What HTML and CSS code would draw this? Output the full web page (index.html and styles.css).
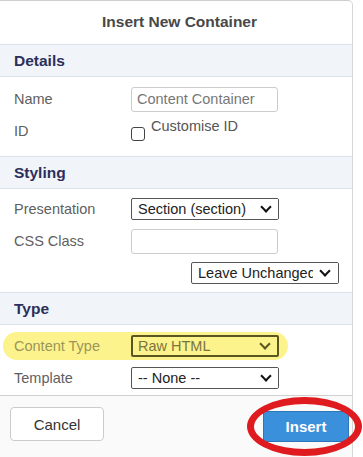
FILE: index.html
```html
<!DOCTYPE html>
<html lang="en">
<head>
  <meta charset="UTF-8">
  <title>Insert New Container</title>
  <link rel="stylesheet" href="styles.css">
</head>
<body>
  <div class="dialog">
    <div class="dialog__title">Insert New Container</div>

    <div class="band">Details</div>
    <div class="fields">
      <div class="row">
        <label class="row__label">Name</label>
        <input class="text-input" type="text" placeholder="Content Container">
      </div>
      <div class="row">
        <label class="row__label">ID</label>
        <label class="check"><span class="check__box"></span><span class="check__text">Customise ID</span></label>
      </div>
    </div>

    <div class="band">Styling</div>
    <div class="fields fields--styling">
      <div class="row">
        <label class="row__label">Presentation</label>
        <div class="select">Section (section)<span class="select__arrow"></span></div>
      </div>
      <div class="row">
        <label class="row__label">CSS Class</label>
        <input class="text-input" type="text">
      </div>
      <div class="row row--right">
        <div class="select select--clip">Leave Unchanged<span class="select__arrow"></span></div>
      </div>
    </div>

    <div class="band">Type</div>
    <div class="fields fields--type">
      <div class="row row--marked">
        <span class="highlight"></span>
        <label class="row__label">Content Type</label>
        <div class="select">Raw HTML<span class="select__arrow"></span></div>
      </div>
      <div class="row">
        <label class="row__label">Template</label>
        <div class="select">-- None --<span class="select__arrow"></span></div>
      </div>
    </div>

    <div class="dialog__footer">
      <button class="btn">Cancel</button>
      <div class="insert-wrap">
        <button class="btn btn--primary">Insert</button>
        <span class="circle"></span>
      </div>
    </div>
  </div>
</body>
</html>
```

FILE: styles.css
```css
html, body {
  margin: 0;
  background: #fff;
  font-family: "Liberation Sans", Arial, sans-serif;
  overflow: hidden;
}

.dialog {
  width: 352px;
  height: 457px;
  border-top: 1px solid #cfcfcf;
  border-right: 1px solid #d6d6d6;
  border-top-right-radius: 5px;
  background: #fff;
  position: relative;
}

.dialog__title {
  height: 43px;
  line-height: 41px;
  text-align: center;
  padding-left: 7px;
  font-size: 15.5px;
  font-weight: bold;
  color: #484848;
  border-bottom: 1px solid #dde3ec;
  border-top-right-radius: 5px;
}

.band {
  height: 31px;
  line-height: 31px;
  padding-left: 14px;
  background: #f1f5fa;
  border-bottom: 1px solid #dde3ec;
  color: #2c2f5b;
  font-size: 15.5px;
  font-weight: bold;
}

.fields {
  padding: 6px 0 9px;
  border-bottom: 1px solid #dde3ec;
}

.fields--styling {
  padding: 4px 0 3px;
}

.fields--type {
  padding: 5px 0 1px;
  border-bottom: 1px solid #d0d0d0;
}

.row {
  position: relative;
  display: flex;
  align-items: center;
  height: 32px;
}

.row--right {
  padding-left: 191px;
}

.row__label {
  width: 117px;
  padding-left: 14px;
  font-size: 14.5px;
  color: #606060;
  position: relative;
}

.text-input {
  box-sizing: border-box;
  width: 147px;
  height: 25px;
  margin: 0;
  padding: 0 5px;
  border: 1px solid #ccc;
  border-radius: 3px;
  font-family: inherit;
  font-size: 14.5px;
  color: #555;
  outline: none;
}

.text-input::placeholder {
  color: #777;
}

.check {
  display: flex;
  align-items: flex-start;
  height: 22px;
  color: #555;
  font-size: 14.5px;
}

.check__box {
  box-sizing: border-box;
  width: 14px;
  height: 14px;
  margin-top: 7px;
  border: 1px solid #444;
  border-radius: 3px;
  background: #fff;
}

.check__text {
  margin-left: 6px;
  margin-top: -2px;
}

.select {
  position: relative;
  box-sizing: border-box;
  width: 148px;
  height: 22px;
  line-height: 20px;
  padding-left: 6px;
  border: 1px solid #555;
  border-radius: 2px;
  font-size: 14.5px;
  color: #222;
  background: #fff;
  white-space: nowrap;
  overflow: hidden;
}

.select__arrow {
  position: absolute;
  right: 0;
  top: 0;
  width: 24px;
  height: 20px;
  background: inherit;
}

.select--clip .select__arrow {
  width: 25px;
}

.select__arrow::after {
  content: "";
  position: absolute;
  left: 8px;
  top: 4px;
  width: 6px;
  height: 6px;
  border-right: 2px solid #111;
  border-bottom: 2px solid #111;
  transform: rotate(45deg);
}

/* highlighted row: yellow marker behind the content */
.highlight {
  position: absolute;
  left: 3px;
  top: 2px;
  width: 285px;
  height: 28px;
  border-radius: 14px;
  background: #fdf38c;
}

.row--marked .row__label {
  color: #9a955a;
}

.row--marked .select {
  border: 2px solid #5a561f;
  line-height: 18px;
  padding-left: 5px;
  color: #7a7540;
  background: #fdf38c;
}

.row--marked .select__arrow {
  height: 18px;
}

.row--marked .select__arrow::after {
  top: 3px;
  border-color: #5a561f;
}

.dialog__footer {
  height: 60px;
  background: #fafafa;
  display: flex;
  justify-content: space-between;
  align-items: flex-start;
  padding: 11px 3px 0 10px;
}

.btn {
  box-sizing: border-box;
  width: 94px;
  height: 34px;
  margin: 0;
  border: 1px solid #ccc;
  border-radius: 4px;
  background: #fff;
  font-family: inherit;
  font-size: 15px;
  color: #333;
}

.insert-wrap {
  position: relative;
  padding-top: 4px;
}

.btn--primary {
  width: 86px;
  height: 31px;
  border: 1px solid #2d77b8;
  border-radius: 0;
  background: #3b90dc;
  color: #fff;
  font-weight: bold;
}

.circle {
  position: absolute;
  left: -16px;
  top: -10px;
  width: 101px;
  height: 45px;
  border: 7px solid #e01b1f;
  border-radius: 50%;
}
```
